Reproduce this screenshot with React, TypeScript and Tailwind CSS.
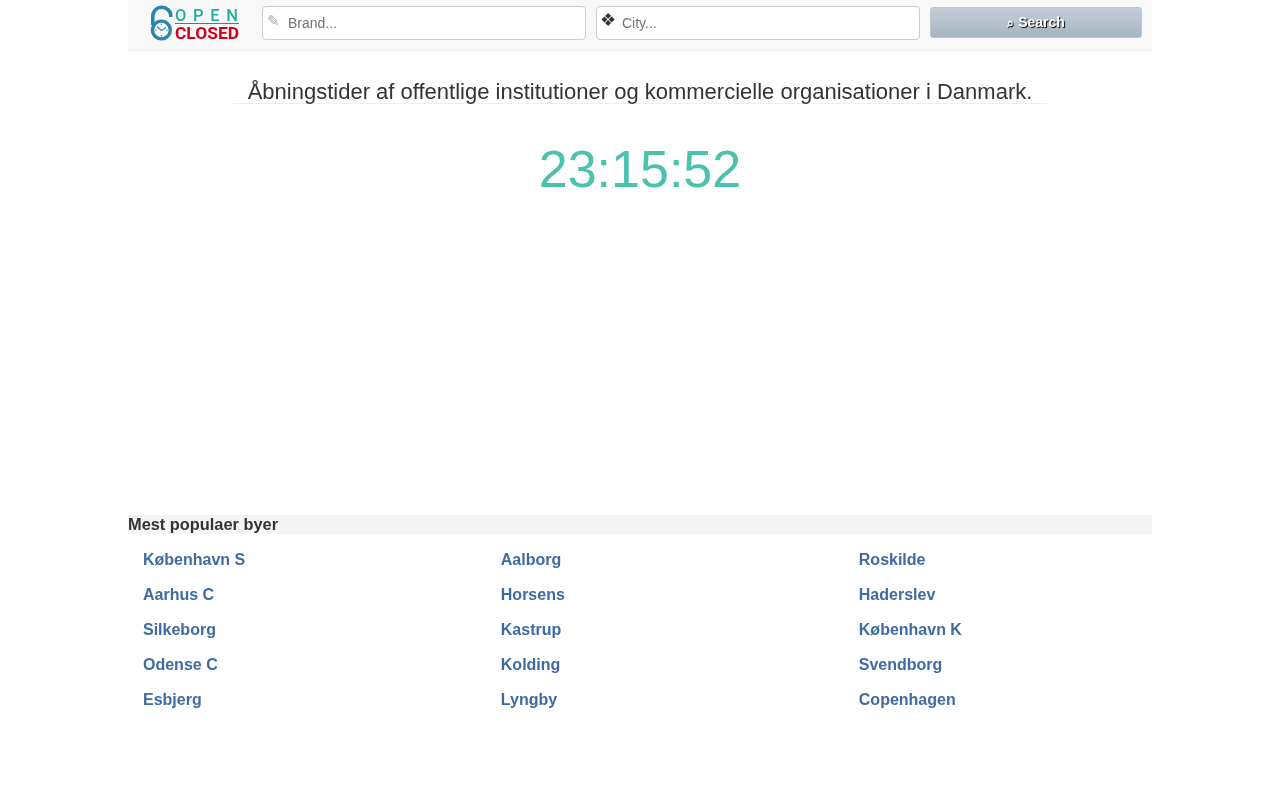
const cities = [
  ["København S", "Aalborg", "Roskilde"],
  ["Aarhus C", "Horsens", "Haderslev"],
  ["Silkeborg", "Kastrup", "København K"],
  ["Odense C", "Kolding", "Svendborg"],
  ["Esbjerg", "Lyngby", "Copenhagen"],
];

function Logo() {
  return (
    <svg width="92" height="40" viewBox="0 0 92 40" className="block">
      <path d="M3.8 20 V11 a9 8.5 0 0 1 18 -0.5 V12" fill="none" stroke="#2a86ad" strokeWidth="3.6" />
      <circle cx="12.4" cy="25" r="8.9" fill="#fff" stroke="#2a86ad" strokeWidth="3.4" />
      <path d="M8 21.5 L12.4 25.5 L17 22.5" fill="none" stroke="#2a86ad" strokeWidth="1.2" />
      <path d="M12.4 18.5 V20 M12.4 30 V31.5 M6 25 H7.5 M17.3 25 H18.8" stroke="#2a86ad" strokeWidth="1" />
      <text x="26" y="16" textLength="63" lengthAdjust="spacing" fontFamily="Roboto, sans-serif" fontSize="16.5" fill="#22b09a" fontWeight="500">OPEN</text>
      <rect x="26" y="18" width="64" height="1" fill="#2a86ad" />
      <text x="26" y="34" textLength="64" lengthAdjust="spacingAndGlyphs" fontFamily="Roboto, sans-serif" fontSize="17" fill="#d0021b" fontWeight="700">CLOSED</text>
    </svg>
  );
}

export default function App() {
  return (
    <div className="mx-auto w-[1024px] font-['Liberation_Sans',sans-serif] text-[#333] will-change-transform">
      <header className="flex h-[51px] items-start border-b border-[#eeeeee] bg-[#f8f8f8]">
        <div className="ml-[21px] mt-[5px] w-[113px]"><Logo /></div>
        <div className="relative mt-[6px] h-[34px] w-[324px] rounded-[4px] border border-[#cccccc] bg-white">
          <span className="absolute left-[4px] top-[4px] text-[15px] leading-[20px] text-[#aaa] font-['DejaVu_Sans',sans-serif]">✎</span>
          <span className="block pl-[25px] text-[14px] leading-[32px] text-[#757575]">Brand...</span>
        </div>
        <div className="relative ml-[10px] mt-[6px] h-[34px] w-[324px] rounded-[4px] border border-[#cccccc] bg-white">
          <span className="absolute left-[3px] top-[2px] text-[18px] leading-[22px] text-[#333] font-['DejaVu_Sans',sans-serif]">❖</span>
          <span className="block pl-[25px] text-[14px] leading-[32px] text-[#757575]">City...</span>
        </div>
        <div className="ml-[10px] mt-[7px] flex h-[31px] w-[212px] items-center justify-center rounded-[3px] border border-[#c0c8d0] bg-gradient-to-b from-[#c5ced7] to-[#a6b4c1] text-[14px] font-bold text-white [text-shadow:1px_1px_1px_#000]">
          <span className="mr-[4px] text-[12px] font-['DejaVu_Sans',sans-serif]">⌕</span>Search
        </div>
      </header>
      <main className="flex flex-col items-center">
        <h1 className="mt-[28px] h-[25px] w-[814px] border-b border-[#eeeeee] text-center text-[22px] font-normal leading-[26px] text-[#333]">
          Åbningstider af offentlige institutioner og kommercielle organisationer i Danmark.
        </h1>
        <div className="mt-[30px] h-[381px] text-[52px] leading-[70px] text-[#4bc2ab]">23:15:52</div>
      </main>
      <section>
        <h2 className="h-[19px] bg-[#f5f5f5] text-[16.38px] font-bold leading-[19px] text-[#333]">Mest populaer byer</h2>
        <div className="mt-[8px] grid grid-cols-[357.8px_358px_1fr]">
          {cities.flat().map((c) => (
            <a key={c} className="h-[35px] pl-[15px] text-[16px] font-bold leading-[35px] text-[#3f6ba3]">{c}</a>
          ))}
        </div>
      </section>
    </div>
  );
}
